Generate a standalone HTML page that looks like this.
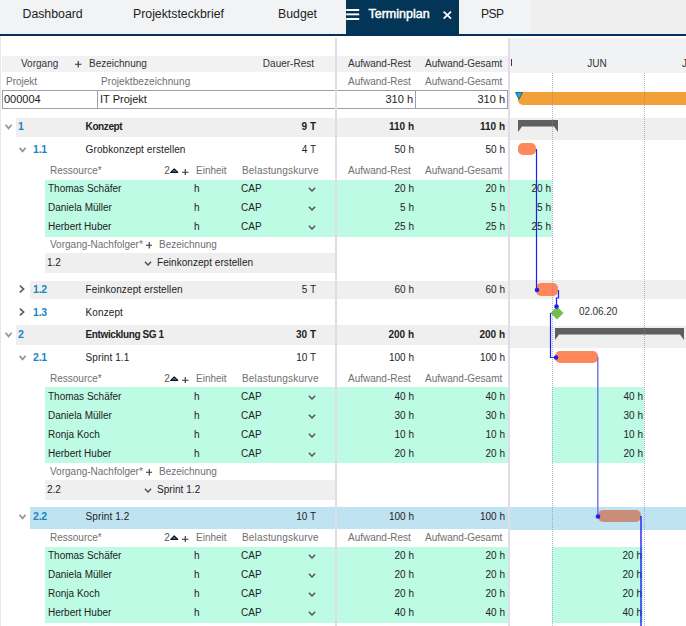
<!DOCTYPE html>
<html><head><meta charset="utf-8"><style>
html,body{margin:0;padding:0;}
body{width:686px;height:626px;overflow:hidden;position:relative;background:#fff;font-family:"Liberation Sans", sans-serif;}
body>div,body>svg{position:absolute;box-sizing:content-box;}
</style></head><body>
<div style="left:0px;top:0px;width:531px;height:34px;background:#f2f3f5;"></div>
<div style="left:531px;top:0px;width:155px;height:34px;background:#efefef;"></div>
<div style="left:346px;top:0px;width:113px;height:34px;background:#033557;"></div>
<div style="left:0px;top:34px;width:686px;height:2px;background:#02315a;"></div>
<div style="top:3.74px;height:20px;line-height:20px;font-size:12.3px;color:#222;font-weight:normal;white-space:nowrap;left:22.5px;">Dashboard</div>
<div style="top:3.74px;height:20px;line-height:20px;font-size:12.3px;color:#222;font-weight:normal;white-space:nowrap;left:133px;">Projektsteckbrief</div>
<div style="top:3.74px;height:20px;line-height:20px;font-size:12.3px;color:#222;font-weight:normal;white-space:nowrap;left:278px;">Budget</div>
<div style="top:3.67px;height:20px;line-height:20px;font-size:12.5px;color:#ffffff;font-weight:normal;white-space:nowrap;left:368.5px;-webkit-text-stroke:0.45px #fff;">Terminplan</div>
<div style="top:3.84px;height:20px;line-height:20px;font-size:12px;color:#222;font-weight:normal;white-space:nowrap;letter-spacing:-0.5px;left:481px;">PSP</div>
<svg style="left:346px;top:0;width:14px;height:24px" viewBox="0 0 14 24"><rect x="0.2" y="9" width="13" height="2" fill="#fff"/><rect x="0.2" y="13.4" width="13" height="1.9" fill="#fff"/><rect x="0.2" y="18" width="13" height="2" fill="#fff"/></svg>
<svg style="left:442px;top:10px;width:10px;height:10px" viewBox="0 0 10 10"><path d="M1.6 1.6L9 8.6M9 1.6L1.6 8.6" stroke="#fff" stroke-width="1.7"/></svg>
<div style="left:0px;top:36px;width:1px;height:590px;background:#e6e6e6;"></div>
<div style="left:510px;top:38px;width:176px;height:35px;background:#f1f2f4;"></div>
<div style="left:2px;top:56px;width:333px;height:16px;background:#f1f2f4;"></div>
<div style="left:337px;top:56px;width:171px;height:16px;background:#f1f2f4;"></div>
<div style="left:335px;top:38px;width:2px;height:588px;background:#e3dbe6;"></div>
<div style="left:508px;top:38px;width:2px;height:588px;background:#e3dbe6;"></div>
<div style="top:53.53px;height:20px;line-height:20px;font-size:10px;color:#333;font-weight:normal;white-space:nowrap;left:21px;">Vorgang</div>
<svg style="left:75.15px;top:61.05px;width:6.5px;height:6.5px" viewBox="0 0 6.5 6.5"><path d="M3.25 0V6.5M0 3.25H6.5" stroke="#333" stroke-width="1.1"/></svg>
<div style="top:53.53px;height:20px;line-height:20px;font-size:10px;color:#333;font-weight:normal;white-space:nowrap;left:89px;">Bezeichnung</div>
<div style="top:53.53px;height:20px;line-height:20px;font-size:10px;color:#333;font-weight:normal;white-space:nowrap;right:372px;text-align:right;">Dauer-Rest</div>
<div style="top:53.53px;height:20px;line-height:20px;font-size:10px;color:#333;font-weight:normal;white-space:nowrap;left:348px;">Aufwand-Rest</div>
<div style="top:53.53px;height:20px;line-height:20px;font-size:10px;color:#333;font-weight:normal;white-space:nowrap;left:425px;">Aufwand-Gesamt</div>
<div style="left:511px;top:59px;width:1px;height:7px;background:#6a1a70;"></div>
<div style="top:53.53px;height:20px;line-height:20px;font-size:10px;color:#333;font-weight:normal;white-space:nowrap;left:497px;width:200px;text-align:center;">JUN</div>
<div style="top:53.53px;height:20px;line-height:20px;font-size:10px;color:#333;font-weight:normal;white-space:nowrap;left:682px;">J</div>
<div style="top:71.53px;height:20px;line-height:20px;font-size:10px;color:#6f6f6f;font-weight:normal;white-space:nowrap;left:6px;">Projekt</div>
<div style="top:71.53px;height:20px;line-height:20px;font-size:10px;color:#6f6f6f;font-weight:normal;white-space:nowrap;letter-spacing:0.08px;left:101px;">Projektbezeichnung</div>
<div style="top:71.53px;height:20px;line-height:20px;font-size:10px;color:#6f6f6f;font-weight:normal;white-space:nowrap;left:348px;">Aufwand-Rest</div>
<div style="top:71.53px;height:20px;line-height:20px;font-size:10px;color:#6f6f6f;font-weight:normal;white-space:nowrap;left:425px;">Aufwand-Gesamt</div>
<div style="left:2px;top:90px;width:332px;height:17px;border:1px solid #9aa0a8;border-right:none"></div>
<div style="left:97px;top:91px;width:1px;height:17px;background:#9aa0a8;"></div>
<div style="left:337px;top:90px;width:170px;height:17px;border:1px solid #9aa0a8;border-left:none"></div>
<div style="left:415px;top:91px;width:1px;height:17px;background:#9aa0a8;"></div>
<div style="top:89.19px;height:20px;line-height:20px;font-size:11px;color:#222;font-weight:normal;white-space:nowrap;left:4px;">000004</div>
<div style="top:89.19px;height:20px;line-height:20px;font-size:11px;color:#222;font-weight:normal;white-space:nowrap;left:100px;">IT Projekt</div>
<div style="top:89.19px;height:20px;line-height:20px;font-size:11px;color:#222;font-weight:normal;white-space:nowrap;right:273px;text-align:right;">310 h</div>
<div style="top:89.19px;height:20px;line-height:20px;font-size:11px;color:#222;font-weight:normal;white-space:nowrap;right:181px;text-align:right;">310 h</div>
<div style="left:16px;top:118px;width:319px;height:19px;background:#efefef;"></div>
<div style="left:337px;top:118px;width:171px;height:19px;background:#efefef;"></div>
<div style="left:510px;top:118px;width:176px;height:22px;background:#efefef;"></div>
<svg style="left:5px;top:124px;width:8px;height:6px" viewBox="0 0 8 6"><path d="M0.6 0.8L3.6 4.4L6.6 0.8" fill="none" stroke="#959595" stroke-width="1.7"/></svg>
<div style="top:116.36px;height:20px;line-height:20px;font-size:10.5px;color:#1b86c0;font-weight:bold;white-space:nowrap;letter-spacing:-0.2px;left:18px;">1</div>
<div style="top:116.53px;height:20px;line-height:20px;font-size:10px;color:#222;font-weight:bold;white-space:nowrap;letter-spacing:-0.4px;left:85.6px;">Konzept</div>
<div style="top:116.53px;height:20px;line-height:20px;font-size:10px;color:#222;font-weight:bold;white-space:nowrap;right:370px;text-align:right;">9 T</div>
<div style="top:116.53px;height:20px;line-height:20px;font-size:10px;color:#222;font-weight:bold;white-space:nowrap;right:272px;text-align:right;">110 h</div>
<div style="top:116.53px;height:20px;line-height:20px;font-size:10px;color:#222;font-weight:bold;white-space:nowrap;right:181px;text-align:right;">110 h</div>
<svg style="left:19px;top:147px;width:8px;height:6px" viewBox="0 0 8 6"><path d="M0.6 0.8L3.6 4.4L6.6 0.8" fill="none" stroke="#959595" stroke-width="1.7"/></svg>
<div style="top:139.36px;height:20px;line-height:20px;font-size:10.5px;color:#1b86c0;font-weight:bold;white-space:nowrap;letter-spacing:-0.2px;left:33px;">1.1</div>
<div style="top:139.53px;height:20px;line-height:20px;font-size:10px;color:#222;font-weight:normal;white-space:nowrap;letter-spacing:0.1px;left:85.6px;">Grobkonzept erstellen</div>
<div style="top:139.53px;height:20px;line-height:20px;font-size:10px;color:#222;font-weight:normal;white-space:nowrap;right:370px;text-align:right;">4 T</div>
<div style="top:139.53px;height:20px;line-height:20px;font-size:10px;color:#222;font-weight:normal;white-space:nowrap;right:272px;text-align:right;">50 h</div>
<div style="top:139.53px;height:20px;line-height:20px;font-size:10px;color:#222;font-weight:normal;white-space:nowrap;right:181px;text-align:right;">50 h</div>
<div style="top:160.53px;height:20px;line-height:20px;font-size:10px;color:#6f6f6f;font-weight:normal;white-space:nowrap;left:50px;">Ressource*</div>
<div style="top:160.53px;height:20px;line-height:20px;font-size:10px;color:#555;font-weight:normal;white-space:nowrap;left:164.3px;">2</div>
<svg style="left:170px;top:168px;width:8.5px;height:5px" viewBox="0 0 8.5 5"><path d="M0.7 4.4L4.25 0.8L7.8 4.4Z" fill="#2a7ab8" stroke="#151515" stroke-width="1.1" stroke-linejoin="round"/></svg>
<svg style="left:182.35px;top:168.75px;width:6.5px;height:6.5px" viewBox="0 0 6.5 6.5"><path d="M3.25 0V6.5M0 3.25H6.5" stroke="#333" stroke-width="1.1"/></svg>
<div style="top:160.53px;height:20px;line-height:20px;font-size:10px;color:#6f6f6f;font-weight:normal;white-space:nowrap;left:196px;">Einheit</div>
<div style="top:160.53px;height:20px;line-height:20px;font-size:10px;color:#6f6f6f;font-weight:normal;white-space:nowrap;letter-spacing:0.18px;left:242px;">Belastungskurve</div>
<div style="top:160.53px;height:20px;line-height:20px;font-size:10px;color:#6f6f6f;font-weight:normal;white-space:nowrap;left:348px;">Aufwand-Rest</div>
<div style="top:160.53px;height:20px;line-height:20px;font-size:10px;color:#6f6f6f;font-weight:normal;white-space:nowrap;left:425px;">Aufwand-Gesamt</div>
<div style="left:45px;top:180px;width:290px;height:57px;background:#bdfbe5;"></div>
<div style="left:337px;top:180px;width:171px;height:57px;background:#bdfbe5;"></div>
<div style="left:510px;top:180px;width:42px;height:57px;background:#bdfbe5;"></div>
<div style="top:178.53px;height:20px;line-height:20px;font-size:10px;color:#222;font-weight:normal;white-space:nowrap;left:48px;">Thomas Sch&auml;fer</div>
<div style="top:178.53px;height:20px;line-height:20px;font-size:10px;color:#222;font-weight:normal;white-space:nowrap;left:194px;">h</div>
<div style="top:178.53px;height:20px;line-height:20px;font-size:10px;color:#222;font-weight:normal;white-space:nowrap;left:241px;">CAP</div>
<svg style="left:307.5px;top:187px;width:8px;height:5px" viewBox="0 0 8 5"><path d="M0.9 0.8L4 4L7.1 0.8" fill="none" stroke="#555" stroke-width="1.5"/></svg>
<div style="top:178.53px;height:20px;line-height:20px;font-size:10px;color:#222;font-weight:normal;white-space:nowrap;right:272px;text-align:right;">20 h</div>
<div style="top:178.53px;height:20px;line-height:20px;font-size:10px;color:#222;font-weight:normal;white-space:nowrap;right:181px;text-align:right;">20 h</div>
<div style="top:178.53px;height:20px;line-height:20px;font-size:10px;color:#222;font-weight:normal;white-space:nowrap;right:135px;text-align:right;">20 h</div>
<div style="top:197.53px;height:20px;line-height:20px;font-size:10px;color:#222;font-weight:normal;white-space:nowrap;left:48px;">Daniela M&uuml;ller</div>
<div style="top:197.53px;height:20px;line-height:20px;font-size:10px;color:#222;font-weight:normal;white-space:nowrap;left:194px;">h</div>
<div style="top:197.53px;height:20px;line-height:20px;font-size:10px;color:#222;font-weight:normal;white-space:nowrap;left:241px;">CAP</div>
<svg style="left:307.5px;top:206px;width:8px;height:5px" viewBox="0 0 8 5"><path d="M0.9 0.8L4 4L7.1 0.8" fill="none" stroke="#555" stroke-width="1.5"/></svg>
<div style="top:197.53px;height:20px;line-height:20px;font-size:10px;color:#222;font-weight:normal;white-space:nowrap;right:272px;text-align:right;">5 h</div>
<div style="top:197.53px;height:20px;line-height:20px;font-size:10px;color:#222;font-weight:normal;white-space:nowrap;right:181px;text-align:right;">5 h</div>
<div style="top:197.53px;height:20px;line-height:20px;font-size:10px;color:#222;font-weight:normal;white-space:nowrap;right:135px;text-align:right;">5 h</div>
<div style="top:216.53px;height:20px;line-height:20px;font-size:10px;color:#222;font-weight:normal;white-space:nowrap;left:48px;">Herbert Huber</div>
<div style="top:216.53px;height:20px;line-height:20px;font-size:10px;color:#222;font-weight:normal;white-space:nowrap;left:194px;">h</div>
<div style="top:216.53px;height:20px;line-height:20px;font-size:10px;color:#222;font-weight:normal;white-space:nowrap;left:241px;">CAP</div>
<svg style="left:307.5px;top:225px;width:8px;height:5px" viewBox="0 0 8 5"><path d="M0.9 0.8L4 4L7.1 0.8" fill="none" stroke="#555" stroke-width="1.5"/></svg>
<div style="top:216.53px;height:20px;line-height:20px;font-size:10px;color:#222;font-weight:normal;white-space:nowrap;right:272px;text-align:right;">25 h</div>
<div style="top:216.53px;height:20px;line-height:20px;font-size:10px;color:#222;font-weight:normal;white-space:nowrap;right:181px;text-align:right;">25 h</div>
<div style="top:216.53px;height:20px;line-height:20px;font-size:10px;color:#222;font-weight:normal;white-space:nowrap;right:135px;text-align:right;">25 h</div>
<div style="top:234.53px;height:20px;line-height:20px;font-size:10px;color:#6f6f6f;font-weight:normal;white-space:nowrap;left:50px;">Vorgang-Nachfolger*</div>
<svg style="left:145.75px;top:242.25px;width:6.5px;height:6.5px" viewBox="0 0 6.5 6.5"><path d="M3.25 0V6.5M0 3.25H6.5" stroke="#333" stroke-width="1.1"/></svg>
<div style="top:234.53px;height:20px;line-height:20px;font-size:10px;color:#6f6f6f;font-weight:normal;white-space:nowrap;left:159px;">Bezeichnung</div>
<div style="left:45px;top:253px;width:290px;height:20px;background:#efefef;"></div>
<div style="top:252.53px;height:20px;line-height:20px;font-size:10px;color:#222;font-weight:normal;white-space:nowrap;left:47px;">1.2</div>
<svg style="left:144px;top:261px;width:8px;height:5px" viewBox="0 0 8 5"><path d="M0.9 0.8L4 4L7.1 0.8" fill="none" stroke="#555" stroke-width="1.5"/></svg>
<div style="top:252.53px;height:20px;line-height:20px;font-size:10px;color:#222;font-weight:normal;white-space:nowrap;letter-spacing:0.05px;left:157px;">Feinkonzept erstellen</div>
<div style="left:30px;top:281px;width:305px;height:18px;background:#efefef;"></div>
<div style="left:337px;top:281px;width:171px;height:18px;background:#efefef;"></div>
<div style="left:510px;top:280px;width:176px;height:19px;background:#efefef;"></div>
<svg style="left:19px;top:285px;width:6px;height:8px" viewBox="0 0 6 8"><path d="M0.8 0.7L4.6 4L0.8 7.3" fill="none" stroke="#585858" stroke-width="1.6"/></svg>
<div style="top:279.36px;height:20px;line-height:20px;font-size:10.5px;color:#1b86c0;font-weight:bold;white-space:nowrap;letter-spacing:-0.2px;left:33px;">1.2</div>
<div style="top:279.54px;height:20px;line-height:20px;font-size:10px;color:#222;font-weight:normal;white-space:nowrap;letter-spacing:0.1px;left:85.6px;">Feinkonzept erstellen</div>
<div style="top:279.54px;height:20px;line-height:20px;font-size:10px;color:#222;font-weight:normal;white-space:nowrap;right:370px;text-align:right;">5 T</div>
<div style="top:279.54px;height:20px;line-height:20px;font-size:10px;color:#222;font-weight:normal;white-space:nowrap;right:272px;text-align:right;">60 h</div>
<div style="top:279.54px;height:20px;line-height:20px;font-size:10px;color:#222;font-weight:normal;white-space:nowrap;right:181px;text-align:right;">60 h</div>
<svg style="left:19px;top:308px;width:6px;height:8px" viewBox="0 0 6 8"><path d="M0.8 0.7L4.6 4L0.8 7.3" fill="none" stroke="#585858" stroke-width="1.6"/></svg>
<div style="top:302.36px;height:20px;line-height:20px;font-size:10.5px;color:#1b86c0;font-weight:bold;white-space:nowrap;letter-spacing:-0.2px;left:33px;">1.3</div>
<div style="top:302.54px;height:20px;line-height:20px;font-size:10px;color:#222;font-weight:normal;white-space:nowrap;letter-spacing:0.1px;left:85.6px;">Konzept</div>
<div style="left:16px;top:325px;width:319px;height:20px;background:#efefef;"></div>
<div style="left:337px;top:325px;width:171px;height:20px;background:#efefef;"></div>
<div style="left:510px;top:326px;width:176px;height:22px;background:#efefef;"></div>
<svg style="left:5px;top:332px;width:8px;height:6px" viewBox="0 0 8 6"><path d="M0.6 0.8L3.6 4.4L6.6 0.8" fill="none" stroke="#959595" stroke-width="1.7"/></svg>
<div style="top:324.36px;height:20px;line-height:20px;font-size:10.5px;color:#1b86c0;font-weight:bold;white-space:nowrap;letter-spacing:-0.2px;left:18px;">2</div>
<div style="top:324.54px;height:20px;line-height:20px;font-size:10px;color:#222;font-weight:bold;white-space:nowrap;letter-spacing:-0.4px;left:85.6px;">Entwicklung SG 1</div>
<div style="top:324.54px;height:20px;line-height:20px;font-size:10px;color:#222;font-weight:bold;white-space:nowrap;right:370px;text-align:right;">30 T</div>
<div style="top:324.54px;height:20px;line-height:20px;font-size:10px;color:#222;font-weight:bold;white-space:nowrap;right:272px;text-align:right;">200 h</div>
<div style="top:324.54px;height:20px;line-height:20px;font-size:10px;color:#222;font-weight:bold;white-space:nowrap;right:181px;text-align:right;">200 h</div>
<svg style="left:19px;top:355px;width:8px;height:6px" viewBox="0 0 8 6"><path d="M0.6 0.8L3.6 4.4L6.6 0.8" fill="none" stroke="#959595" stroke-width="1.7"/></svg>
<div style="top:347.36px;height:20px;line-height:20px;font-size:10.5px;color:#1b86c0;font-weight:bold;white-space:nowrap;letter-spacing:-0.2px;left:33px;">2.1</div>
<div style="top:347.54px;height:20px;line-height:20px;font-size:10px;color:#222;font-weight:normal;white-space:nowrap;letter-spacing:0.1px;left:85.6px;">Sprint 1.1</div>
<div style="top:347.54px;height:20px;line-height:20px;font-size:10px;color:#222;font-weight:normal;white-space:nowrap;right:370px;text-align:right;">10 T</div>
<div style="top:347.54px;height:20px;line-height:20px;font-size:10px;color:#222;font-weight:normal;white-space:nowrap;right:272px;text-align:right;">100 h</div>
<div style="top:347.54px;height:20px;line-height:20px;font-size:10px;color:#222;font-weight:normal;white-space:nowrap;right:181px;text-align:right;">100 h</div>
<div style="top:368.54px;height:20px;line-height:20px;font-size:10px;color:#6f6f6f;font-weight:normal;white-space:nowrap;left:50px;">Ressource*</div>
<div style="top:368.54px;height:20px;line-height:20px;font-size:10px;color:#555;font-weight:normal;white-space:nowrap;left:164.3px;">2</div>
<svg style="left:170px;top:376px;width:8.5px;height:5px" viewBox="0 0 8.5 5"><path d="M0.7 4.4L4.25 0.8L7.8 4.4Z" fill="#2a7ab8" stroke="#151515" stroke-width="1.1" stroke-linejoin="round"/></svg>
<svg style="left:182.35px;top:376.75px;width:6.5px;height:6.5px" viewBox="0 0 6.5 6.5"><path d="M3.25 0V6.5M0 3.25H6.5" stroke="#333" stroke-width="1.1"/></svg>
<div style="top:368.54px;height:20px;line-height:20px;font-size:10px;color:#6f6f6f;font-weight:normal;white-space:nowrap;left:196px;">Einheit</div>
<div style="top:368.54px;height:20px;line-height:20px;font-size:10px;color:#6f6f6f;font-weight:normal;white-space:nowrap;letter-spacing:0.18px;left:242px;">Belastungskurve</div>
<div style="top:368.54px;height:20px;line-height:20px;font-size:10px;color:#6f6f6f;font-weight:normal;white-space:nowrap;left:348px;">Aufwand-Rest</div>
<div style="top:368.54px;height:20px;line-height:20px;font-size:10px;color:#6f6f6f;font-weight:normal;white-space:nowrap;left:425px;">Aufwand-Gesamt</div>
<div style="left:45px;top:387px;width:290px;height:76px;background:#bdfbe5;"></div>
<div style="left:337px;top:387px;width:171px;height:76px;background:#bdfbe5;"></div>
<div style="left:552px;top:387px;width:92px;height:76px;background:#bdfbe5;"></div>
<div style="top:386.54px;height:20px;line-height:20px;font-size:10px;color:#222;font-weight:normal;white-space:nowrap;left:48px;">Thomas Sch&auml;fer</div>
<div style="top:386.54px;height:20px;line-height:20px;font-size:10px;color:#222;font-weight:normal;white-space:nowrap;left:194px;">h</div>
<div style="top:386.54px;height:20px;line-height:20px;font-size:10px;color:#222;font-weight:normal;white-space:nowrap;left:241px;">CAP</div>
<svg style="left:307.5px;top:395px;width:8px;height:5px" viewBox="0 0 8 5"><path d="M0.9 0.8L4 4L7.1 0.8" fill="none" stroke="#555" stroke-width="1.5"/></svg>
<div style="top:386.54px;height:20px;line-height:20px;font-size:10px;color:#222;font-weight:normal;white-space:nowrap;right:272px;text-align:right;">40 h</div>
<div style="top:386.54px;height:20px;line-height:20px;font-size:10px;color:#222;font-weight:normal;white-space:nowrap;right:181px;text-align:right;">40 h</div>
<div style="top:386.54px;height:20px;line-height:20px;font-size:10px;color:#222;font-weight:normal;white-space:nowrap;right:43px;text-align:right;">40 h</div>
<div style="top:405.54px;height:20px;line-height:20px;font-size:10px;color:#222;font-weight:normal;white-space:nowrap;left:48px;">Daniela M&uuml;ller</div>
<div style="top:405.54px;height:20px;line-height:20px;font-size:10px;color:#222;font-weight:normal;white-space:nowrap;left:194px;">h</div>
<div style="top:405.54px;height:20px;line-height:20px;font-size:10px;color:#222;font-weight:normal;white-space:nowrap;left:241px;">CAP</div>
<svg style="left:307.5px;top:414px;width:8px;height:5px" viewBox="0 0 8 5"><path d="M0.9 0.8L4 4L7.1 0.8" fill="none" stroke="#555" stroke-width="1.5"/></svg>
<div style="top:405.54px;height:20px;line-height:20px;font-size:10px;color:#222;font-weight:normal;white-space:nowrap;right:272px;text-align:right;">30 h</div>
<div style="top:405.54px;height:20px;line-height:20px;font-size:10px;color:#222;font-weight:normal;white-space:nowrap;right:181px;text-align:right;">30 h</div>
<div style="top:405.54px;height:20px;line-height:20px;font-size:10px;color:#222;font-weight:normal;white-space:nowrap;right:43px;text-align:right;">30 h</div>
<div style="top:424.54px;height:20px;line-height:20px;font-size:10px;color:#222;font-weight:normal;white-space:nowrap;left:48px;">Ronja Koch</div>
<div style="top:424.54px;height:20px;line-height:20px;font-size:10px;color:#222;font-weight:normal;white-space:nowrap;left:194px;">h</div>
<div style="top:424.54px;height:20px;line-height:20px;font-size:10px;color:#222;font-weight:normal;white-space:nowrap;left:241px;">CAP</div>
<svg style="left:307.5px;top:433px;width:8px;height:5px" viewBox="0 0 8 5"><path d="M0.9 0.8L4 4L7.1 0.8" fill="none" stroke="#555" stroke-width="1.5"/></svg>
<div style="top:424.54px;height:20px;line-height:20px;font-size:10px;color:#222;font-weight:normal;white-space:nowrap;right:272px;text-align:right;">10 h</div>
<div style="top:424.54px;height:20px;line-height:20px;font-size:10px;color:#222;font-weight:normal;white-space:nowrap;right:181px;text-align:right;">10 h</div>
<div style="top:424.54px;height:20px;line-height:20px;font-size:10px;color:#222;font-weight:normal;white-space:nowrap;right:43px;text-align:right;">10 h</div>
<div style="top:443.54px;height:20px;line-height:20px;font-size:10px;color:#222;font-weight:normal;white-space:nowrap;left:48px;">Herbert Huber</div>
<div style="top:443.54px;height:20px;line-height:20px;font-size:10px;color:#222;font-weight:normal;white-space:nowrap;left:194px;">h</div>
<div style="top:443.54px;height:20px;line-height:20px;font-size:10px;color:#222;font-weight:normal;white-space:nowrap;left:241px;">CAP</div>
<svg style="left:307.5px;top:452px;width:8px;height:5px" viewBox="0 0 8 5"><path d="M0.9 0.8L4 4L7.1 0.8" fill="none" stroke="#555" stroke-width="1.5"/></svg>
<div style="top:443.54px;height:20px;line-height:20px;font-size:10px;color:#222;font-weight:normal;white-space:nowrap;right:272px;text-align:right;">20 h</div>
<div style="top:443.54px;height:20px;line-height:20px;font-size:10px;color:#222;font-weight:normal;white-space:nowrap;right:181px;text-align:right;">20 h</div>
<div style="top:443.54px;height:20px;line-height:20px;font-size:10px;color:#222;font-weight:normal;white-space:nowrap;right:43px;text-align:right;">20 h</div>
<div style="top:461.54px;height:20px;line-height:20px;font-size:10px;color:#6f6f6f;font-weight:normal;white-space:nowrap;left:50px;">Vorgang-Nachfolger*</div>
<svg style="left:145.75px;top:469.25px;width:6.5px;height:6.5px" viewBox="0 0 6.5 6.5"><path d="M3.25 0V6.5M0 3.25H6.5" stroke="#333" stroke-width="1.1"/></svg>
<div style="top:461.54px;height:20px;line-height:20px;font-size:10px;color:#6f6f6f;font-weight:normal;white-space:nowrap;left:159px;">Bezeichnung</div>
<div style="left:45px;top:480px;width:290px;height:20px;background:#efefef;"></div>
<div style="top:479.54px;height:20px;line-height:20px;font-size:10px;color:#222;font-weight:normal;white-space:nowrap;left:47px;">2.2</div>
<svg style="left:144px;top:488px;width:8px;height:5px" viewBox="0 0 8 5"><path d="M0.9 0.8L4 4L7.1 0.8" fill="none" stroke="#555" stroke-width="1.5"/></svg>
<div style="top:479.54px;height:20px;line-height:20px;font-size:10px;color:#222;font-weight:normal;white-space:nowrap;letter-spacing:0.05px;left:157px;">Sprint 1.2</div>
<div style="left:30px;top:507px;width:305px;height:22px;background:#c0e3f2;"></div>
<div style="left:337px;top:507px;width:171px;height:22px;background:#c0e3f2;"></div>
<div style="left:510px;top:507px;width:176px;height:23px;background:#c0e3f2;"></div>
<svg style="left:19px;top:514px;width:8px;height:6px" viewBox="0 0 8 6"><path d="M0.6 0.8L3.6 4.4L6.6 0.8" fill="none" stroke="#959595" stroke-width="1.7"/></svg>
<div style="top:506.36px;height:20px;line-height:20px;font-size:10.5px;color:#1b86c0;font-weight:bold;white-space:nowrap;letter-spacing:-0.2px;left:33px;">2.2</div>
<div style="top:506.54px;height:20px;line-height:20px;font-size:10px;color:#222;font-weight:normal;white-space:nowrap;letter-spacing:0.1px;left:85.6px;">Sprint 1.2</div>
<div style="top:506.54px;height:20px;line-height:20px;font-size:10px;color:#222;font-weight:normal;white-space:nowrap;right:370px;text-align:right;">10 T</div>
<div style="top:506.54px;height:20px;line-height:20px;font-size:10px;color:#222;font-weight:normal;white-space:nowrap;right:272px;text-align:right;">100 h</div>
<div style="top:506.54px;height:20px;line-height:20px;font-size:10px;color:#222;font-weight:normal;white-space:nowrap;right:181px;text-align:right;">100 h</div>
<div style="top:527.53px;height:20px;line-height:20px;font-size:10px;color:#6f6f6f;font-weight:normal;white-space:nowrap;left:50px;">Ressource*</div>
<div style="top:527.53px;height:20px;line-height:20px;font-size:10px;color:#555;font-weight:normal;white-space:nowrap;left:164.3px;">2</div>
<svg style="left:170px;top:535px;width:8.5px;height:5px" viewBox="0 0 8.5 5"><path d="M0.7 4.4L4.25 0.8L7.8 4.4Z" fill="#2a7ab8" stroke="#151515" stroke-width="1.1" stroke-linejoin="round"/></svg>
<svg style="left:182.35px;top:535.75px;width:6.5px;height:6.5px" viewBox="0 0 6.5 6.5"><path d="M3.25 0V6.5M0 3.25H6.5" stroke="#333" stroke-width="1.1"/></svg>
<div style="top:527.53px;height:20px;line-height:20px;font-size:10px;color:#6f6f6f;font-weight:normal;white-space:nowrap;left:196px;">Einheit</div>
<div style="top:527.53px;height:20px;line-height:20px;font-size:10px;color:#6f6f6f;font-weight:normal;white-space:nowrap;letter-spacing:0.18px;left:242px;">Belastungskurve</div>
<div style="top:527.53px;height:20px;line-height:20px;font-size:10px;color:#6f6f6f;font-weight:normal;white-space:nowrap;left:348px;">Aufwand-Rest</div>
<div style="top:527.53px;height:20px;line-height:20px;font-size:10px;color:#6f6f6f;font-weight:normal;white-space:nowrap;left:425px;">Aufwand-Gesamt</div>
<div style="left:45px;top:547px;width:290px;height:76px;background:#bdfbe5;"></div>
<div style="left:337px;top:547px;width:171px;height:76px;background:#bdfbe5;"></div>
<div style="left:552px;top:547px;width:91px;height:76px;background:#bdfbe5;"></div>
<div style="top:545.53px;height:20px;line-height:20px;font-size:10px;color:#222;font-weight:normal;white-space:nowrap;left:48px;">Thomas Sch&auml;fer</div>
<div style="top:545.53px;height:20px;line-height:20px;font-size:10px;color:#222;font-weight:normal;white-space:nowrap;left:194px;">h</div>
<div style="top:545.53px;height:20px;line-height:20px;font-size:10px;color:#222;font-weight:normal;white-space:nowrap;left:241px;">CAP</div>
<svg style="left:307.5px;top:554px;width:8px;height:5px" viewBox="0 0 8 5"><path d="M0.9 0.8L4 4L7.1 0.8" fill="none" stroke="#555" stroke-width="1.5"/></svg>
<div style="top:545.53px;height:20px;line-height:20px;font-size:10px;color:#222;font-weight:normal;white-space:nowrap;right:272px;text-align:right;">20 h</div>
<div style="top:545.53px;height:20px;line-height:20px;font-size:10px;color:#222;font-weight:normal;white-space:nowrap;right:181px;text-align:right;">20 h</div>
<div style="top:545.53px;height:20px;line-height:20px;font-size:10px;color:#222;font-weight:normal;white-space:nowrap;right:44px;text-align:right;">20 h</div>
<div style="top:564.53px;height:20px;line-height:20px;font-size:10px;color:#222;font-weight:normal;white-space:nowrap;left:48px;">Daniela M&uuml;ller</div>
<div style="top:564.53px;height:20px;line-height:20px;font-size:10px;color:#222;font-weight:normal;white-space:nowrap;left:194px;">h</div>
<div style="top:564.53px;height:20px;line-height:20px;font-size:10px;color:#222;font-weight:normal;white-space:nowrap;left:241px;">CAP</div>
<svg style="left:307.5px;top:573px;width:8px;height:5px" viewBox="0 0 8 5"><path d="M0.9 0.8L4 4L7.1 0.8" fill="none" stroke="#555" stroke-width="1.5"/></svg>
<div style="top:564.53px;height:20px;line-height:20px;font-size:10px;color:#222;font-weight:normal;white-space:nowrap;right:272px;text-align:right;">20 h</div>
<div style="top:564.53px;height:20px;line-height:20px;font-size:10px;color:#222;font-weight:normal;white-space:nowrap;right:181px;text-align:right;">20 h</div>
<div style="top:564.53px;height:20px;line-height:20px;font-size:10px;color:#222;font-weight:normal;white-space:nowrap;right:44px;text-align:right;">20 h</div>
<div style="top:583.53px;height:20px;line-height:20px;font-size:10px;color:#222;font-weight:normal;white-space:nowrap;left:48px;">Ronja Koch</div>
<div style="top:583.53px;height:20px;line-height:20px;font-size:10px;color:#222;font-weight:normal;white-space:nowrap;left:194px;">h</div>
<div style="top:583.53px;height:20px;line-height:20px;font-size:10px;color:#222;font-weight:normal;white-space:nowrap;left:241px;">CAP</div>
<svg style="left:307.5px;top:592px;width:8px;height:5px" viewBox="0 0 8 5"><path d="M0.9 0.8L4 4L7.1 0.8" fill="none" stroke="#555" stroke-width="1.5"/></svg>
<div style="top:583.53px;height:20px;line-height:20px;font-size:10px;color:#222;font-weight:normal;white-space:nowrap;right:272px;text-align:right;">20 h</div>
<div style="top:583.53px;height:20px;line-height:20px;font-size:10px;color:#222;font-weight:normal;white-space:nowrap;right:181px;text-align:right;">20 h</div>
<div style="top:583.53px;height:20px;line-height:20px;font-size:10px;color:#222;font-weight:normal;white-space:nowrap;right:44px;text-align:right;">20 h</div>
<div style="top:602.53px;height:20px;line-height:20px;font-size:10px;color:#222;font-weight:normal;white-space:nowrap;left:48px;">Herbert Huber</div>
<div style="top:602.53px;height:20px;line-height:20px;font-size:10px;color:#222;font-weight:normal;white-space:nowrap;left:194px;">h</div>
<div style="top:602.53px;height:20px;line-height:20px;font-size:10px;color:#222;font-weight:normal;white-space:nowrap;left:241px;">CAP</div>
<svg style="left:307.5px;top:611px;width:8px;height:5px" viewBox="0 0 8 5"><path d="M0.9 0.8L4 4L7.1 0.8" fill="none" stroke="#555" stroke-width="1.5"/></svg>
<div style="top:602.53px;height:20px;line-height:20px;font-size:10px;color:#222;font-weight:normal;white-space:nowrap;right:272px;text-align:right;">40 h</div>
<div style="top:602.53px;height:20px;line-height:20px;font-size:10px;color:#222;font-weight:normal;white-space:nowrap;right:181px;text-align:right;">40 h</div>
<div style="top:602.53px;height:20px;line-height:20px;font-size:10px;color:#222;font-weight:normal;white-space:nowrap;right:44px;text-align:right;">40 h</div>
<div style="left:518px;top:92px;width:168px;height:13px;background:#f2a038;border-bottom-left-radius:5px"></div>
<svg style="left:515px;top:92px;width:9px;height:8px" viewBox="0 0 9 8"><path d="M0.5 0.5H7.5L4 7.3Z" fill="#0ab0f0" stroke="#3b5566" stroke-width="0.9" stroke-linejoin="round"/></svg>
<svg style="left:518px;top:120px;width:40px;height:12px" viewBox="0 0 40 12"><path d="M0 0H40V12L36 6.5H4L0 12Z" fill="#5f5f5f"/></svg>
<svg style="left:555px;top:328px;width:129px;height:12px" viewBox="0 0 129 12"><path d="M0 0H129V12L125 6.5H4L0 12Z" fill="#5f5f5f"/></svg>
<div style="left:518px;top:143px;width:18px;height:12px;background:#ff875c;border-radius:5px"></div>
<div style="left:536px;top:283px;width:22px;height:13px;background:#ff875c;border-radius:5px"></div>
<div style="left:555px;top:351px;width:43px;height:12px;background:#ff875c;border-radius:5px"></div>
<div style="left:598px;top:510px;width:43px;height:12px;background:#c98e7a;border-radius:5px"></div>
<svg style="left:550px;top:306px;width:14px;height:14px" viewBox="0 0 14 14"><path d="M7 0.5L13.5 7L7 13.5L0.5 7Z" fill="#74c044"/></svg>
<div style="top:301.54px;height:20px;line-height:20px;font-size:10px;color:#333;font-weight:normal;white-space:nowrap;letter-spacing:-0.1px;left:579px;">02.06.20</div>
<div style="left:552px;top:73px;width:1px;height:553px;background:repeating-linear-gradient(to bottom,rgba(120,132,170,0.6) 0 1px,transparent 1px 2px)"></div>
<div style="left:644px;top:73px;width:1px;height:553px;background:repeating-linear-gradient(to bottom,rgba(120,132,170,0.6) 0 1px,transparent 1px 2px)"></div>
<svg style="left:0;top:0;width:686px;height:626px" viewBox="0 0 686 626">
<path d="M536.5 149V290H537" fill="none" stroke="#1e1ef5" stroke-width="1.2"/>
<circle cx="537" cy="290" r="2.3" fill="#1e1ef5"/>
<path d="M558.5 290V298H556.5V306" fill="none" stroke="#1e1ef5" stroke-width="1.2"/>
<circle cx="556.5" cy="306.5" r="2.3" fill="#1e1ef5"/>
<path d="M550.5 313V357.5H556" fill="none" stroke="#1e1ef5" stroke-width="1.2"/>
<circle cx="556" cy="357.5" r="2.3" fill="#1e1ef5"/>
<path d="M597.8 357V516.5" fill="none" stroke="#6f6ff0" stroke-width="1.4"/>
<circle cx="598" cy="516.5" r="2.3" fill="#1e1ef5"/>
<path d="M641 516V626" fill="none" stroke="#1e1ef5" stroke-width="1.4"/>
</svg>
</body></html>
